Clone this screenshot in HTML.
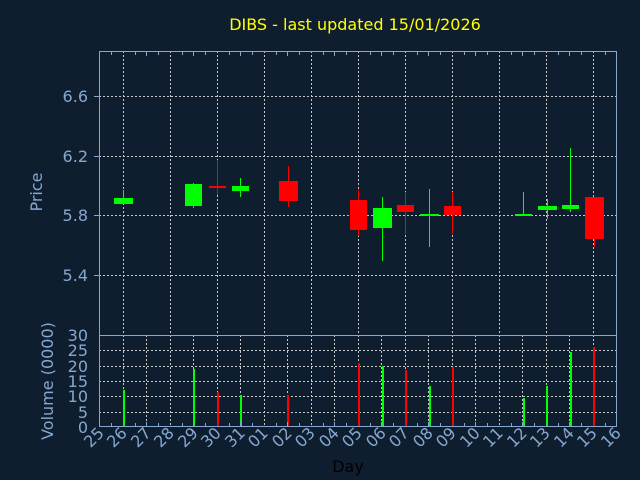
<!DOCTYPE html>
<html><head><meta charset="utf-8"><style>
html,body{margin:0;padding:0;background:#0f1e2e;}
svg{display:block;font-family:"DejaVu Sans","Liberation Sans",sans-serif;}
</style></head><body>
<svg width="640" height="480" viewBox="0 0 640 480" shape-rendering="crispEdges">
<rect width="640" height="480" fill="#0f1e2e"/>
<text x="355" y="30" fill="#ffff00" font-size="16" text-anchor="middle" shape-rendering="auto">DIBS - last updated 15/01/2026</text>
<g stroke="#c8c8c8" stroke-width="1" stroke-dasharray="2,2" fill="none">
<line x1="99" y1="96.5" x2="617" y2="96.5"/>
<line x1="99" y1="156.5" x2="617" y2="156.5"/>
<line x1="99" y1="215.5" x2="617" y2="215.5"/>
<line x1="99" y1="275.5" x2="617" y2="275.5"/>
<line x1="99" y1="350.5" x2="617" y2="350.5"/>
<line x1="99" y1="366.5" x2="617" y2="366.5"/>
<line x1="99" y1="381.5" x2="617" y2="381.5"/>
<line x1="99" y1="396.5" x2="617" y2="396.5"/>
<line x1="99" y1="412.5" x2="617" y2="412.5"/>
<line x1="123.5" y1="51" x2="123.5" y2="427"/>
<line x1="170.5" y1="51" x2="170.5" y2="427"/>
<line x1="217.5" y1="51" x2="217.5" y2="427"/>
<line x1="264.5" y1="51" x2="264.5" y2="427"/>
<line x1="311.5" y1="51" x2="311.5" y2="427"/>
<line x1="358.5" y1="51" x2="358.5" y2="427"/>
<line x1="405.5" y1="51" x2="405.5" y2="427"/>
<line x1="452.5" y1="51" x2="452.5" y2="427"/>
<line x1="499.5" y1="51" x2="499.5" y2="427"/>
<line x1="546.5" y1="51" x2="546.5" y2="427"/>
<line x1="593.5" y1="51" x2="593.5" y2="427"/>
<line x1="146.5" y1="335" x2="146.5" y2="427"/><line x1="193.5" y1="335" x2="193.5" y2="427"/>
<line x1="240.5" y1="335" x2="240.5" y2="427"/><line x1="287.5" y1="335" x2="287.5" y2="427"/>
<line x1="334.5" y1="335" x2="334.5" y2="427"/><line x1="381.5" y1="335" x2="381.5" y2="427"/>
<line x1="428.5" y1="335" x2="428.5" y2="427"/><line x1="475.5" y1="335" x2="475.5" y2="427"/>
<line x1="522.5" y1="335" x2="522.5" y2="427"/><line x1="569.5" y1="335" x2="569.5" y2="427"/>
</g>
<g>
<rect x="123" y="190" width="1" height="14" fill="#00ff00"/><rect x="114" y="198" width="19" height="6" fill="#00ff00"/>
<rect x="193" y="183" width="1" height="25" fill="#00ff00"/><rect x="185" y="184" width="17" height="22" fill="#00ff00"/>
<rect x="217" y="160" width="1" height="35" fill="#ff0000"/><rect x="209" y="186" width="17" height="2" fill="#ff0000"/>
<rect x="240" y="178" width="1" height="19" fill="#00ff00"/><rect x="232" y="186" width="17" height="5" fill="#00ff00"/>
<rect x="288" y="166" width="1" height="41" fill="#ff0000"/><rect x="279" y="181" width="19" height="20" fill="#ff0000"/>
<rect x="358" y="190" width="1" height="46" fill="#ff0000"/><rect x="350" y="200" width="17" height="30" fill="#ff0000"/>
<rect x="382" y="197" width="1" height="64" fill="#00ff00"/><rect x="373" y="208" width="19" height="20" fill="#00ff00"/>
<rect x="405" y="192" width="1" height="42" fill="#ff0000"/><rect x="397" y="205" width="17" height="7" fill="#ff0000"/>
<rect x="429" y="189" width="1" height="58" fill="#00ff00"/><rect x="420" y="214" width="19" height="2" fill="#00ff00"/>
<rect x="452" y="192" width="1" height="42" fill="#ff0000"/><rect x="444" y="206" width="17" height="9" fill="#ff0000"/>
<rect x="523" y="192" width="1" height="24" fill="#00ff00"/><rect x="515" y="214" width="17" height="2" fill="#00ff00"/>
<rect x="547" y="199" width="1" height="20" fill="#00ff00"/><rect x="538" y="206" width="19" height="4" fill="#00ff00"/>
<rect x="570" y="148" width="1" height="64" fill="#00ff00"/><rect x="562" y="205" width="17" height="4" fill="#00ff00"/>
<rect x="594" y="197" width="1" height="50" fill="#ff0000"/><rect x="585" y="197" width="19" height="42" fill="#ff0000"/>
</g>
<g>
<rect x="123" y="390" width="2" height="37" fill="#00ff00"/>
<rect x="193" y="369" width="2" height="58" fill="#00ff00"/>
<rect x="217" y="392" width="2" height="35" fill="#ff0000"/>
<rect x="240" y="395" width="2" height="32" fill="#00ff00"/>
<rect x="287" y="395" width="2" height="32" fill="#ff0000"/>
<rect x="358" y="363" width="2" height="64" fill="#ff0000"/>
<rect x="382" y="366" width="2" height="61" fill="#00ff00"/>
<rect x="405" y="370" width="2" height="57" fill="#ff0000"/>
<rect x="429" y="386" width="2" height="41" fill="#00ff00"/>
<rect x="452" y="367" width="2" height="60" fill="#ff0000"/>
<rect x="523" y="398" width="2" height="29" fill="#00ff00"/>
<rect x="546" y="386" width="2" height="41" fill="#00ff00"/>
<rect x="570" y="352" width="2" height="75" fill="#00ff00"/>
<rect x="593" y="347" width="2" height="80" fill="#ff0000"/>
</g>
<g stroke="#86a8d0" stroke-width="1" fill="none">
<rect x="99.5" y="51.5" width="517" height="375"/>
<line x1="99" y1="335.5" x2="617" y2="335.5"/>
<line x1="94" y1="96.5" x2="99" y2="96.5"/><line x1="94" y1="156.5" x2="99" y2="156.5"/>
<line x1="94" y1="215.5" x2="99" y2="215.5"/><line x1="94" y1="275.5" x2="99" y2="275.5"/>
<path d="M111.5 52v3M135.5 52v3M146.5 52v4M158.5 52v3M182.5 52v3M193.5 52v4M205.5 52v3M229.5 52v3M240.5 52v4M252.5 52v3M276.5 52v3M287.5 52v4M299.5 52v3M323.5 52v3M334.5 52v4M346.5 52v3M370.5 52v3M381.5 52v4M393.5 52v3M417.5 52v3M428.5 52v4M440.5 52v3M464.5 52v3M475.5 52v4M487.5 52v3M511.5 52v3M522.5 52v4M534.5 52v3M558.5 52v3M569.5 52v4M581.5 52v3M605.5 52v3"/>
<path d="M111.5 426v-3M135.5 426v-3M146.5 426v-4M158.5 426v-3M182.5 426v-3M193.5 426v-4M205.5 426v-3M229.5 426v-3M240.5 426v-4M252.5 426v-3M276.5 426v-3M287.5 426v-4M299.5 426v-3M323.5 426v-3M334.5 426v-4M346.5 426v-3M370.5 426v-3M381.5 426v-4M393.5 426v-3M417.5 426v-3M428.5 426v-4M440.5 426v-3M464.5 426v-3M475.5 426v-4M487.5 426v-3M511.5 426v-3M522.5 426v-4M534.5 426v-3M558.5 426v-3M569.5 426v-4M581.5 426v-3M605.5 426v-3"/>
</g>
<g fill="#86a8d0" font-size="16" text-anchor="end" shape-rendering="auto">
<text x="88" y="102">6.6</text><text x="88" y="162">6.2</text><text x="88" y="221">5.8</text><text x="88" y="281">5.4</text>
<text x="88" y="341">30</text><text x="88" y="356">25</text><text x="88" y="372">20</text><text x="88" y="387">15</text><text x="88" y="402">10</text><text x="88" y="418">5</text><text x="88" y="433">0</text>
</g>
<g shape-rendering="auto">
<text transform="translate(42,192) rotate(-90)" fill="#86a8d0" font-size="16" text-anchor="middle">Price</text>
<text transform="translate(53,381) rotate(-90)" fill="#86a8d0" font-size="16" text-anchor="middle">Volume (0000)</text>
<g fill="#86a8d0" font-size="16" text-anchor="end">
<text transform="translate(105,434) rotate(-45)">25</text>
<text transform="translate(128,434) rotate(-45)">26</text>
<text transform="translate(152,434) rotate(-45)">27</text>
<text transform="translate(175,434) rotate(-45)">28</text>
<text transform="translate(199,434) rotate(-45)">29</text>
<text transform="translate(222,434) rotate(-45)">30</text>
<text transform="translate(246,434) rotate(-45)">31</text>
<text transform="translate(269,434) rotate(-45)">01</text>
<text transform="translate(293,434) rotate(-45)">02</text>
<text transform="translate(316,434) rotate(-45)">03</text>
<text transform="translate(340,434) rotate(-45)">04</text>
<text transform="translate(363,434) rotate(-45)">05</text>
<text transform="translate(387,434) rotate(-45)">06</text>
<text transform="translate(410,434) rotate(-45)">07</text>
<text transform="translate(434,434) rotate(-45)">08</text>
<text transform="translate(457,434) rotate(-45)">09</text>
<text transform="translate(481,434) rotate(-45)">10</text>
<text transform="translate(504,434) rotate(-45)">11</text>
<text transform="translate(528,434) rotate(-45)">12</text>
<text transform="translate(551,434) rotate(-45)">13</text>
<text transform="translate(575,434) rotate(-45)">14</text>
<text transform="translate(598,434) rotate(-45)">15</text>
<text transform="translate(622,434) rotate(-45)">16</text>
</g>
<text x="348" y="472" fill="#000" font-size="16" text-anchor="middle">Day</text>
</g>
</svg>
</body></html>
